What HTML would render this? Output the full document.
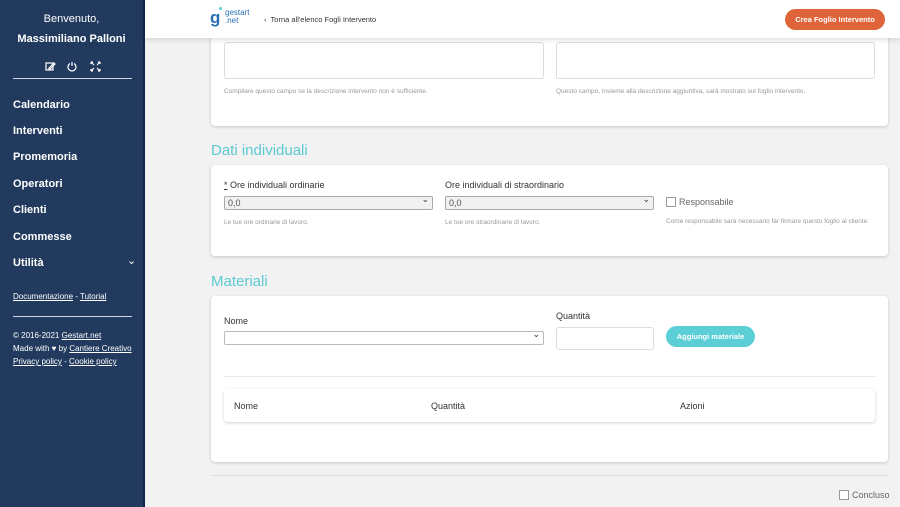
<!DOCTYPE html>
<html><head><meta charset="utf-8"><style>
*{box-sizing:border-box;margin:0;padding:0}
body{width:900px;height:507px;overflow:hidden;background:#f2f2f2;font-family:"Liberation Sans",sans-serif;position:relative;color:#333}
.abs{position:absolute}
#side{left:0;top:0;width:145px;height:507px;background:#213a5e;border-right:2px solid #14244a;color:#fff}
#side .n{position:absolute;left:13px;font-size:11px;font-weight:bold}
#side .s{position:absolute;left:13px;font-size:8px}
#side u{text-decoration:underline}
#hdr{left:145px;top:0;width:755px;height:38px;background:#fff;box-shadow:0 2px 5px rgba(0,0,0,.12);z-index:2}
.card{position:absolute;background:#fff;border-radius:4px;box-shadow:0 1px 3px rgba(0,0,0,.18)}
.ta{position:absolute;border:1px solid #ddd;border-radius:3px;background:#fff}
.help{position:absolute;font-size:6.5px;color:#999}
.lbl{position:absolute;font-size:9px;color:#333}
.sel{position:absolute;height:14px;border:1px solid #aaa;background:#f1f1f1;font-size:9px;color:#555;padding:1px 3px;border-radius:2px}
.sel::after{content:"⌄";position:absolute;right:3px;top:-3px;font-size:9px;color:#333}
h2{position:absolute;font-weight:normal;font-size:15px;color:#5ccad2}
.cb{position:absolute;width:10px;height:10px;border:1px solid #999;background:#fff}
</style></head><body>
<div id="side" class="abs">
<div class="abs" style="left:0;width:143px;top:13px;text-align:center;font-size:11px">Benvenuto,</div>
<div class="abs" style="left:0;width:143px;top:33px;text-align:center;font-size:11px;font-weight:bold">Massimiliano Palloni</div>
<svg class="abs" style="left:45px;top:61px" width="56" height="11" viewBox="0 0 56 11" fill="none" stroke="#fff" stroke-width="1.2"><rect x="1" y="2" width="7" height="7"/><path d="M4 7l5-5 1 1-5 5H4z"/><path d="M25 2.5a4 4 0 1 0 4 0M27 1v4"/><path d="M46 1l3 3M55 1l-3 3M46 10l3-3M55 10l-3-3M46 1h2M46 1v2M55 1h-2M55 1v2M46 10h2M46 10v-2M55 10h-2M55 10v-2"/></svg>
<div class="abs" style="left:13px;top:78px;width:119px;height:1px;background:#cfd6e0"></div>
<div class="n" style="top:99px">Calendario</div>
<div class="n" style="top:125px">Interventi</div>
<div class="n" style="top:151px">Promemoria</div>
<div class="n" style="top:178px">Operatori</div>
<div class="n" style="top:204px">Clienti</div>
<div class="n" style="top:231px">Commesse</div>
<div class="n" style="top:257px">Utilità</div>
<div class="abs" style="left:127px;top:254px;font-size:11px">⌄</div>
<div class="s" style="top:292px"><u>Documentazione</u> - <u>Tutorial</u></div>
<div class="abs" style="left:13px;top:316px;width:119px;height:1px;background:#cfd6e0"></div>
<div class="s" style="top:331px">© 2016-2021 <u>Gestart.net</u></div>
<div class="s" style="top:344px">Made with ♥ by <u>Cantiere Creativo</u></div>
<div class="s" style="top:357px"><u>Privacy policy</u> - <u>Cookie policy</u></div>
</div>
<div id="hdr" class="abs">
<div class="abs" style="left:65px;top:9px;font-size:17px;font-weight:bold;color:#2a6fb5;line-height:17px">g</div>
<div class="abs" style="left:74px;top:7px;width:3px;height:3px;border-radius:50%;background:#5ccad2"></div>
<div class="abs" style="left:80px;top:9px;font-size:8px;color:#2a6fb5;line-height:8px">gestart<br>.net</div>
<div class="abs" style="left:119px;top:15px;font-size:7.5px;color:#333">‹&nbsp; Torna all'elenco Fogli Intervento</div>
<div class="abs" style="left:640px;top:9px;width:100px;height:21px;border-radius:11px;background:#e0643a;color:#fff;font-size:7.5px;font-weight:bold;text-align:center;line-height:21px">Crea Foglio Intervento</div>
</div>
<div class="card" style="left:211px;top:20px;width:677px;height:106px"></div>
<div class="ta" style="left:224px;top:42px;width:320px;height:37px"></div>
<div class="ta" style="left:556px;top:42px;width:319px;height:37px"></div>
<div class="help" style="left:224px;top:88px">Compilare questo campo se la descrizione intervento non è sufficiente.</div>
<div class="help" style="left:556px;top:88px">Questo campo, insieme alla descrizione aggiuntiva, sarà mostrato sul foglio intervento.</div>
<h2 style="left:211px;top:142px">Dati individuali</h2>
<div class="card" style="left:211px;top:165px;width:677px;height:91px"></div>
<div class="lbl" style="left:224px;top:180px"><u>*</u> Ore individuali ordinarie</div>
<div class="lbl" style="left:445px;top:180px">Ore individuali di straordinario</div>
<div class="sel" style="left:224px;top:196px;width:209px">0,0</div>
<div class="sel" style="left:445px;top:196px;width:209px">0,0</div>
<div class="cb" style="left:666px;top:197px"></div>
<div class="lbl" style="left:679px;top:197px;color:#666">Responsabile</div>
<div class="help" style="left:224px;top:219px">Le tue ore ordinarie di lavoro.</div>
<div class="help" style="left:445px;top:219px">Le tue ore straordinarie di lavoro.</div>
<div class="help" style="left:666px;top:218px">Come responsabile sarà necessario far firmare questo foglio al cliente.</div>
<h2 style="left:211px;top:273px">Materiali</h2>
<div class="card" style="left:211px;top:296px;width:677px;height:166px"></div>
<div class="lbl" style="left:224px;top:316px">Nome</div>
<div class="lbl" style="left:556px;top:311px">Quantità</div>
<div class="sel" style="left:224px;top:331px;width:320px;background:#fff;border-color:#bbb"></div>
<div class="ta" style="left:556px;top:327px;width:98px;height:23px"></div>
<div class="abs" style="left:666px;top:326px;width:89px;height:21px;border-radius:11px;background:#5ccfd6;color:#fff;font-size:7.5px;font-weight:bold;text-align:center;line-height:21px">Aggiungi materiale</div>
<div class="abs" style="left:224px;top:376px;width:651px;height:1px;background:#e8e8e8"></div>
<div class="card" style="left:224px;top:389px;width:651px;height:33px"></div>
<div class="lbl" style="left:234px;top:401px">Nome</div>
<div class="lbl" style="left:431px;top:401px">Quantità</div>
<div class="lbl" style="left:680px;top:401px">Azioni</div>
<div class="abs" style="left:211px;top:475px;width:677px;height:1px;background:#ddd"></div>
<div class="cb" style="left:839px;top:490px"></div>
<div class="lbl" style="left:852px;top:490px;color:#666">Concluso</div>
</body></html>
